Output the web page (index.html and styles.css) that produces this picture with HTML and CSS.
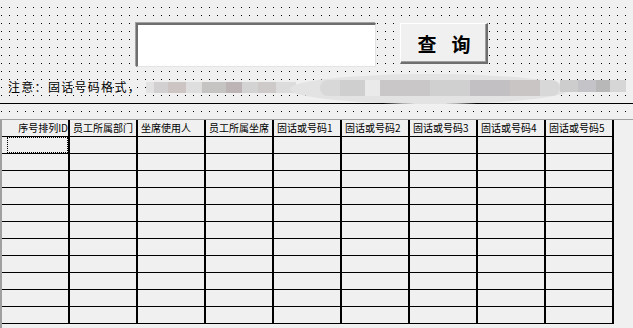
FILE: index.html
```html
<!DOCTYPE html>
<html lang="zh">
<head>
<meta charset="utf-8">
<title>查询</title>
<link rel="stylesheet" href="styles.css">
</head>
<body>
<div class="panel">
  <div class="search">
    <div class="textbox"></div>
    <div class="button"><span>查</span><span>询</span></div>
  </div>
  <div class="note">注意：固话号码格式，</div>
  <div class="rule"></div>
  <div class="mosaic">
    <span class="m-left"></span>
    <span class="m-lens"></span>
    <span class="m-mid"></span>
    <span class="m-right"></span>
  </div>
</div>
<div class="grid">
  <div class="hd right">序号排列ID</div>
  <div class="hd">员工所属部门</div>
  <div class="hd">坐席使用人</div>
  <div class="hd">员工所属坐席</div>
  <div class="hd">固话或号码1</div>
  <div class="hd">固话或号码2</div>
  <div class="hd">固话或号码3</div>
  <div class="hd">固话或号码4</div>
  <div class="hd">固话或号码5</div>

  <div class="cell"><div class="focus"></div></div><div class="cell"></div><div class="cell"></div><div class="cell"></div><div class="cell"></div><div class="cell"></div><div class="cell"></div><div class="cell"></div><div class="cell"></div>
  <div class="cell"></div><div class="cell"></div><div class="cell"></div><div class="cell"></div><div class="cell"></div><div class="cell"></div><div class="cell"></div><div class="cell"></div><div class="cell"></div>
  <div class="cell"></div><div class="cell"></div><div class="cell"></div><div class="cell"></div><div class="cell"></div><div class="cell"></div><div class="cell"></div><div class="cell"></div><div class="cell"></div>
  <div class="cell"></div><div class="cell"></div><div class="cell"></div><div class="cell"></div><div class="cell"></div><div class="cell"></div><div class="cell"></div><div class="cell"></div><div class="cell"></div>
  <div class="cell"></div><div class="cell"></div><div class="cell"></div><div class="cell"></div><div class="cell"></div><div class="cell"></div><div class="cell"></div><div class="cell"></div><div class="cell"></div>
  <div class="cell"></div><div class="cell"></div><div class="cell"></div><div class="cell"></div><div class="cell"></div><div class="cell"></div><div class="cell"></div><div class="cell"></div><div class="cell"></div>
  <div class="cell"></div><div class="cell"></div><div class="cell"></div><div class="cell"></div><div class="cell"></div><div class="cell"></div><div class="cell"></div><div class="cell"></div><div class="cell"></div>
  <div class="cell"></div><div class="cell"></div><div class="cell"></div><div class="cell"></div><div class="cell"></div><div class="cell"></div><div class="cell"></div><div class="cell"></div><div class="cell"></div>
  <div class="cell"></div><div class="cell"></div><div class="cell"></div><div class="cell"></div><div class="cell"></div><div class="cell"></div><div class="cell"></div><div class="cell"></div><div class="cell"></div>
  <div class="cell"></div><div class="cell"></div><div class="cell"></div><div class="cell"></div><div class="cell"></div><div class="cell"></div><div class="cell"></div><div class="cell"></div><div class="cell"></div>
  <div class="cell"></div><div class="cell"></div><div class="cell"></div><div class="cell"></div><div class="cell"></div><div class="cell"></div><div class="cell"></div><div class="cell"></div><div class="cell"></div>
</div>
</body>
</html>
```

FILE: styles.css
```css
html, body {
  margin: 0;
  padding: 0;
  background: #f0f0f0;
  width: 633px;
  height: 328px;
  overflow: hidden;
  font-family: "Noto Sans CJK SC", "Noto Sans", sans-serif;
  color: #000;
}

.panel {
  position: relative;
  height: 119px;
  overflow: hidden;
}

.panel::before {
  content: "";
  position: absolute;
  inset: 0;
  background-image: linear-gradient(to right, #000 1px, transparent 1px);
  background-size: 8px 8px;
  background-position: 1px 0;
  -webkit-mask-image: linear-gradient(to bottom, #000 1px, transparent 1px);
  -webkit-mask-size: 8px 8px;
  -webkit-mask-position: 0 7px;
  mask-image: linear-gradient(to bottom, #000 1px, transparent 1px);
  mask-size: 8px 8px;
  mask-position: 0 7px;
}

.search {
  position: relative;
  display: flex;
  align-items: flex-start;
  gap: 24px;
  padding: 23px 0 0 136px;
}

.textbox {
  box-sizing: border-box;
  width: 240px;
  height: 44px;
  background: #fff;
  border-top: 2px solid #6e6e6e;
  border-left: 2px solid #6e6e6e;
  border-right: 1px solid #e3e3e3;
  border-bottom: 1px solid #e3e3e3;
  box-shadow: -1px -1px 0 #a0a0a0;
}

.button {
  box-sizing: border-box;
  width: 88px;
  height: 41px;
  background: #f0f0f0;
  border-top: 1px solid #fff;
  border-left: 1px solid #fff;
  border-right: 2px solid #6e6e6e;
  border-bottom: 2px solid #6e6e6e;
  box-shadow: inset -1px -1px 0 #a0a0a0;
  display: flex;
  justify-content: center;
  align-items: center;
  gap: 15px;
  font-size: 19px;
  font-weight: bold;
  line-height: 1;
  padding-left: 1px;
}

.note {
  position: relative;
  margin-top: 12px;
  padding-left: 8px;
  height: 16px;
  line-height: 16px;
  font-size: 12px;
  letter-spacing: 1.3px;
}

.rule {
  position: relative;
  margin-top: 8px;
  height: 1px;
  background: #000;
}

.mosaic span {
  position: absolute;
  display: block;
}

.m-left {
  left: 146px;
  top: 82px;
  width: 150px;
  height: 11px;
  background: linear-gradient(to right,
    #e2e2e2 0 8px, #d2d0d0 8px 22px, #cdc4c4 22px 40px, #dedede 40px 56px,
    #c6c3c3 56px 80px, #bdb5b5 80px 96px, #d3d3d3 96px 112px, #cfcaca 112px 130px,
    #dcdcdc 130px 150px);
}

.m-lens {
  left: 290px;
  top: 74px;
  width: 280px;
  height: 30px;
  border-radius: 50%;
  background: #e3e3e3;
}

.m-mid {
  left: 320px;
  top: 80px;
  width: 240px;
  height: 16px;
  border-radius: 8px;
  background: linear-gradient(to right,
    #d8d8d8 0 20px, #cfcfcf 20px 45px, #eaeaea 45px 60px, #c9c7c7 60px 110px,
    #d0d0d0 110px 150px, #c2c0c2 150px 190px, #cac5c5 190px 220px, #d8d8d8 220px 240px);
}

.m-right {
  left: 560px;
  top: 80px;
  width: 66px;
  height: 12px;
  background: linear-gradient(to right,
    #cdcdcd 0 18px, #c3c3c8 18px 36px, #b8b8b8 36px 50px, #d6d6d6 50px 66px);
}

.grid {
  display: grid;
  grid-template-columns: repeat(9, 68px);
  grid-auto-rows: 17px;
  border-top: 1px solid #a0a0a0;
  border-left: 2px solid #a0a0a0;
  height: 300px;
  align-content: start;
}

.hd, .cell {
  box-sizing: border-box;
  border-right: 2px solid #000;
  border-bottom: 1px solid #000;
}

.hd {
  font-size: 10px;
  line-height: 16px;
  padding-left: 3px;
  white-space: nowrap;
  overflow: hidden;
}

.hd.right {
  text-align: right;
  padding-left: 0;
  padding-right: 0;
}

.focus {
  box-sizing: border-box;
  margin-left: 5px;
  height: 16px;
  border: 1px dotted #000;
}
```
